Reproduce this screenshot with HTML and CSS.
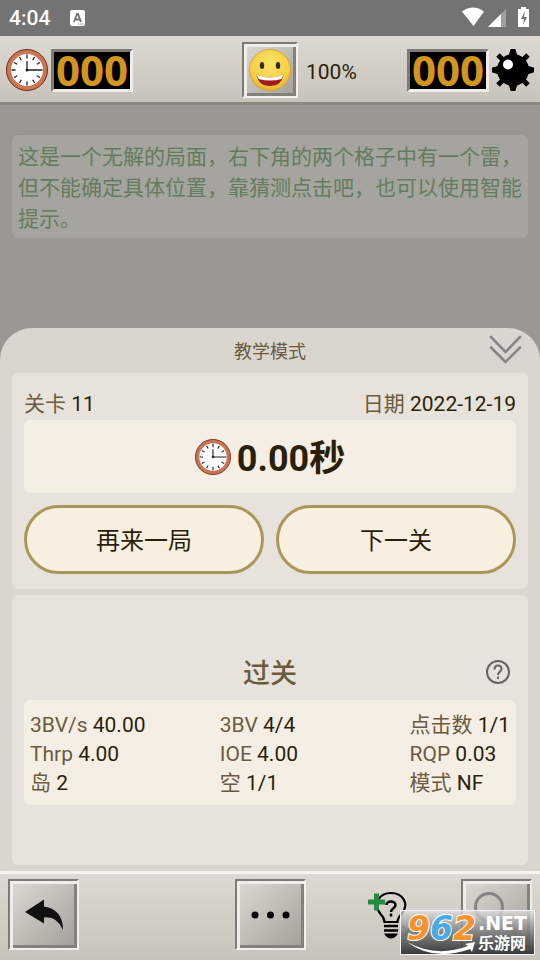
FILE: index.html
```html
<!DOCTYPE html>
<html lang="zh-CN">
<head>
<meta charset="utf-8">
<meta name="viewport" content="width=device-width, initial-scale=1">
<title>教学模式</title>
<link rel="stylesheet" href="styles.css">
</head>
<body>
<svg class="defs" aria-hidden="true">
  <symbol id="clock" viewBox="0 0 42 42">
    <circle cx="21" cy="21" r="20.5" fill="#c87654" stroke="#6b2d1c"/>
    <circle cx="21" cy="21" r="16" fill="#fff"/>
    <g stroke="#222" stroke-width="1.3">
      <path d="M21 5.500v4M21 32.500v4M5.500 21h4M13.500 8l1.800 3.200M28.500 8l-1.800 3.200M8 13.500l3.200 1.800M34 13.500l-3.200 1.800M8 28.500l3.200-1.800M34 28.500l-3.200-1.800M13.500 34l1.800-3.200M28.500 34l-1.800-3.200"/>
      <path d="M21 12v9h15.500" fill="none"/>
    </g>
    <circle cx="21" cy="21" r="1.500" fill="#222"/>
  </symbol>
</svg>

<div class="status">
  <time>4:04</time>
  <svg class="status-app" viewBox="0 0 15 16"><rect width="15" height="16" rx="2" fill="#fff"/><path d="M4 12l3-8h1l3 8M5 9.500h5" fill="none" stroke="#737373" stroke-width="1.800"/><path d="M8 14h6" stroke="#737373" stroke-width="1.200" stroke-dasharray="1.200 1"/></svg>
  <svg class="status-icons" viewBox="0 0 68 22">
    <path d="M0 4.500Q11-3.500 22 4.500L11.500 19Z" fill="#fff"/>
    <path d="M26 20L44 2v18z" fill="#9f9f9f"/><path d="M26 20L39 7v13z" fill="#fff"/>
    <path d="M56 2h3V0h5v2h3v18H56z" fill="#fff"/><path d="M63 4l-4 8h3l-1 6 4-8h-3z" fill="#737373"/>
  </svg>
</div>

<header class="topbar">
  <div class="meter">
    <svg class="icon-big"><use href="#clock"/></svg>
    <output class="lcd">000</output>
  </div>
  <div class="face">
    <button class="bevel face-button" aria-label="新游戏">
      <svg viewBox="0 0 42 42">
        <defs><radialGradient id="skin" cx=".5" cy=".35" r=".7"><stop offset="0" stop-color="#fbe36a"/><stop offset=".7" stop-color="#f4cf40"/><stop offset="1" stop-color="#dfa52c"/></radialGradient></defs>
        <circle cx="21" cy="21" r="20.500" fill="url(#skin)" stroke="#dba437"/>
        <ellipse cx="13" cy="16.500" rx="2.200" ry="3.500" fill="#3b2a14"/><ellipse cx="29" cy="16.500" rx="2.200" ry="3.500" fill="#3b2a14"/>
        <path d="M7.500 25.500q13.500 6 27 0q-2 11.500-13.500 11.500T7.500 25.500z" fill="#a3191b"/><path d="M7.500 25.500q13.500 6 27 0l-2 4.500q-11.500 3-23 0z" fill="#fff"/>
      </svg>
    </button>
    <span class="percent">100%</span>
  </div>
  <div class="meter">
    <output class="lcd">000</output>
    <svg class="icon-big" viewBox="0 0 42 42"><circle cx="21" cy="21" r="16"/><path d="M21 0v42M0 21h42M6 6l30 30M36 6L6 36" stroke="#000" stroke-width="5"/><path d="M18.500 1L16 8h10l-2.500-7zM18.500 41L16 34h10l-2.500 7zM1 18.500L8 16v10l-7-2.500zM41 18.500L34 16v10l7-2.500z"/><circle cx="16" cy="15.500" r="5" fill="#fff"/></svg>
  </div>
</header>

<main>
  <p class="hint">这是一个无解的局面，右下角的两个格子中有一个雷，但不能确定具体位置，靠猜测点击吧，也可以使用智能提示。</p>

  <section class="sheet">
    <div class="sheet-head">
      <h1>教学模式</h1>
      <button class="plain collapse" aria-label="收起"><svg viewBox="0 0 34 30"><path d="M3 2l14.500 15L32 2M3 12.500l14.500 14.500L32 12.500" fill="none" stroke="#858687" stroke-width="2.600" stroke-linecap="round"/></svg></button>
    </div>
    <div class="card">
      <div class="info"><span>关卡 <b>11</b></span><span>日期 <b>2022-12-19</b></span></div>
      <div class="result"><svg><use href="#clock"/></svg><strong>0.00秒</strong></div>
      <div class="actions"><button>再来一局</button><button>下一关</button></div>
    </div>
    <div class="card stats">
      <div class="stats-head">
        <h2>过关</h2>
        <button class="plain help" aria-label="帮助"><svg viewBox="0 0 24 24" fill="none" stroke="#626466" stroke-width="2"><circle cx="12" cy="12" r="11"/><path d="M8.500 9.500C8.500 4 15.500 4.500 15.500 9c0 2.500-3.500 3-3.500 6"/><path d="M12 16.500v2.500"/></svg></button>
      </div>
      <div class="grid">
        <ul><li>3BV/s <b>40.00</b></li><li>Thrp <b>4.00</b></li><li>岛 <b>2</b></li></ul>
        <ul><li>3BV <b>4/4</b></li><li>IOE <b>4.00</b></li><li>空 <b>1/1</b></li></ul>
        <ul><li>点击数 <b>1/1</b></li><li>RQP <b>0.03</b></li><li>模式 <b>NF</b></li></ul>
      </div>
    </div>
  </section>
</main>

<footer class="toolbar">
  <button class="bevel tool" aria-label="返回"><svg viewBox="0 0 67 67"><path d="M15 31L34 18.500v7q19 3 19 23.500q-6-14-19-12.500v6z" fill="#111"/></svg></button>
  <button class="bevel tool" aria-label="更多"><svg viewBox="0 0 67 67"><circle cx="18" cy="34" r="3.500"/><circle cx="33.500" cy="34" r="3.500"/><circle cx="49" cy="34" r="3.500"/></svg></button>
  <div class="tool-pair">
    <button class="plain bulb" aria-label="智能提示">
      <svg viewBox="0 0 40 48"><path d="M16.500 31q0-4-4-8C4 12 12 2 23 2s19 10 11 20.500q-4.500 4.500-4.500 8.500z" fill="none" stroke="#000" stroke-width="2.200"/><path d="M16 35h14M16 39.500h14" stroke="#000" stroke-width="2.500"/><path d="M16 42.500h14q-3 5-7 5t-7-5z"/><path d="M18.500 14c0-5 9-4.500 9 0 0 3.500-4.500 3.500-4.500 7M23 22.500v3" fill="none" stroke="#000" stroke-width="2.500"/><path d="M6 2.500h5v6h6v5h-6v6H6v-6H0v-5h6z" fill="#278a43"/></svg>
      <span class="bulb-count">x</span>
    </button>
    <button class="bevel tool" aria-label="搜索"><svg viewBox="0 0 67 67"><circle cx="26" cy="26" r="13.500" fill="none" stroke="#858583" stroke-width="3"/><path d="M36 36l18 18" stroke="#858583" stroke-width="4"/></svg></button>
  </div>
</footer>

<div class="watermark">
  <svg viewBox="0 0 72 42" class="watermark-mark">
    <text x="1" y="28" class="digits"><tspan fill="#f6932d">9</tspan><tspan fill="#4da9e3">6</tspan><tspan fill="#f6932d">2</tspan></text>
    <path d="M1 30Q30 46 62 34l-3-2 10-2-3 10-2-3Q28 50 1 30z" fill="#fff"/>
  </svg>
  <div class="watermark-name"><b>.NET</b><span>乐游网</span></div>
</div>
</body>
</html>
```
FILE: styles.css
```css
* { box-sizing: border-box; }

body {
  margin: 0;
  min-height: 100vh;
  display: flex;
  flex-direction: column;
  background: linear-gradient(#999892, #989792);
  color: #6b5b3e;
  font: 21px/29px Roboto, "Noto Sans CJK SC", sans-serif;
}

h1, h2, p, ul { margin: 0; padding: 0; }
ul { list-style: none; }
b { font-weight: 400; color: #2a1f08; }
svg { display: block; }
button { font: inherit; color: #2a1f08; padding: 0; }
.defs { position: absolute; width: 0; height: 0; }
.plain { border: 0; background: none; }

/* Status bar */
.status {
  display: flex;
  align-items: center;
  height: 36px;
  padding: 0 10px 0 9px;
  background: #737373;
  color: #fff;
  font-weight: 500;
}
.status-app { width: 15px; height: 16px; margin-left: 20px; }
.status-icons { width: 68px; height: 22px; margin-left: auto; }

/* Counters */
.topbar {
  display: grid;
  grid-template-columns: 1fr auto 1fr;
  align-items: center;
  height: 69px;
  padding: 2px 6px 0;
  border-bottom: 3px solid #89887f;
  background: linear-gradient(#dddad3, #c8c3ba);
}
.meter { display: flex; align-items: center; gap: 3px; }
.meter:last-child { justify-content: flex-end; }
.icon-big { width: 42px; height: 42px; }
.lcd {
  width: 82px;
  height: 43px;
  border: 3px solid;
  border-color: #7d7b76 #efede9 #efede9 #7d7b76;
  background: #000;
  color: #d2951f;
  font: 700 42px/35px "Noto Sans", sans-serif;
  text-align: center;
}
.face { position: relative; }
.percent {
  position: absolute;
  left: 100%;
  top: 16px;
  padding-left: 8px;
  color: #2a1f08;
}
.bevel {
  border: 2px solid;
  border-color: #7d7b76 #f2f0ec #f2f0ec #7d7b76;
  background: linear-gradient(135deg, #dddad4, #a39f98);
  box-shadow: inset 3px 3px #efede9, inset -3px -3px #83817b;
}
.face-button { display: block; width: 56px; height: 56px; padding: 5px; }

/* Board and result sheet */
main { flex: 1; display: flex; flex-direction: column; }
.hint {
  margin: 30px 12px;
  padding: 7px 6px 3px;
  border-radius: 6px;
  background: #a5a49f;
  color: #637c5e;
  line-height: 31px;
}
.sheet {
  flex: none;
  display: flex;
  flex-direction: column;
  gap: 6px;
  margin-top: auto;
  padding: 0 12px 6px;
  border-radius: 32px 32px 0 0;
  background: #d9d6cf;
}
.sheet-head { position: relative; height: 39px; }
h1 { font-size: 18px; font-weight: 400; line-height: 48px; text-align: center; }
.collapse { position: absolute; right: 6px; top: 7px; }
.collapse svg { width: 34px; height: 30px; }
.card { padding: 17px 12px 15px; border-radius: 6px; background: #e7e3dc; }
.info { display: flex; justify-content: space-between; padding-bottom: 1px; }
.result {
  display: flex;
  align-items: center;
  justify-content: center;
  gap: 6px;
  height: 73px;
  border-radius: 6px;
  background: #f5eee4;
}
.result svg { width: 36px; height: 36px; }
.result strong { padding-top: 4px; color: #2a1f08; font-size: 36px; line-height: 46px; }
.actions { display: grid; grid-template-columns: 1fr 1fr; gap: 12px; margin-top: 12px; }
.actions button {
  height: 69px;
  padding-top: 4px;
  border: 3px solid #ab965a;
  border-radius: 35px;
  background: #f8efe0;
  font-size: 24px;
}
.stats { height: 270px; padding-top: 50px; }
.stats-head { position: relative; height: 55px; padding-top: 2px; }
h2 { font-size: 27px; font-weight: 500; line-height: 55px; text-align: center; }
.help { position: absolute; right: 6px; top: 15px; }
.help svg { width: 24px; height: 24px; }
.grid {
  display: grid;
  grid-template-columns: 1fr 1fr auto;
  padding: 11px 6px 7px;
  border-radius: 6px;
  background: #f5eee4;
}
.grid ul { white-space: nowrap; }

/* Toolbar */
.toolbar {
  display: grid;
  grid-template-columns: 1fr auto 1fr;
  align-items: start;
  height: 89px;
  padding: 5px 8px 0;
  border-top: 3px solid #f5f4f1;
  background: linear-gradient(#dddad3, #c8c3ba);
}
.tool { width: 71px; height: 71px; }
.tool-pair { display: flex; align-items: center; justify-content: flex-end; gap: 53px; }
.bulb { position: relative; }
.bulb svg { width: 40px; height: 48px; }
.bulb-count { position: absolute; left: 34px; bottom: -6px; color: #6f6c66; }

/* Site badge lying over the toolbar */
.watermark {
  position: absolute;
  right: 5px;
  bottom: 5px;
  display: flex;
  width: 135px;
  height: 45px;
  padding: 1px 0 0 5px;
  border: 1px solid #f4f4f4;
  background: linear-gradient(rgba(225, 225, 225, 0.75), rgba(120, 120, 120, 0.85) 50%, rgba(50, 50, 50, 0.95));
  color: #fff;
}
.watermark-mark { flex: none; width: 72px; height: 42px; overflow: visible; }
.digits {
  font: italic 700 33px "DejaVu Sans", sans-serif;
  stroke: #fff;
  stroke-width: 2px;
  paint-order: stroke;
}
.watermark-name { font-size: 16px; font-weight: 700; line-height: 20px; }
.watermark-name b {
  display: block;
  color: #fff;
  font: 700 19px/22px "DejaVu Sans", sans-serif;
}
.watermark-name span { display: block; }
```
